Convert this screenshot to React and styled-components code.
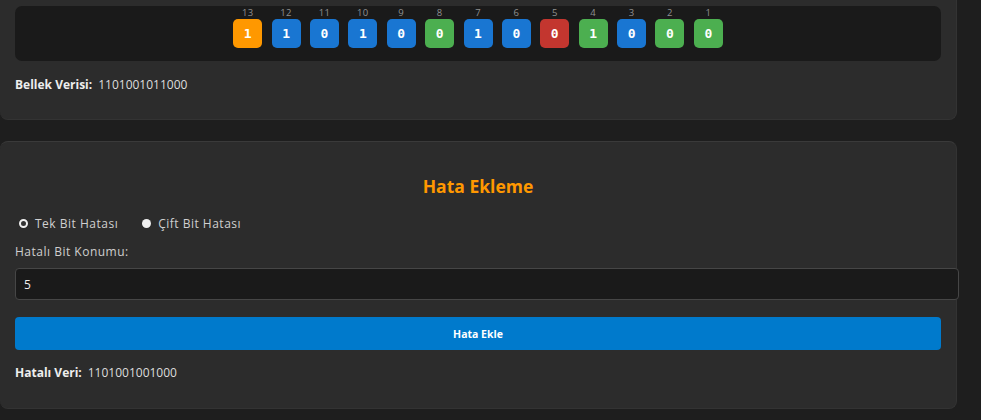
import React, { useState } from "react";
import styled, { createGlobalStyle } from "styled-components";

const GlobalStyle = createGlobalStyle`
  html, body {
    margin: 0;
    padding: 0;
    background: #1e1e1e;
    overflow: hidden;
  }
  body {
    font-family: "Open Sans", "Noto Sans", Arial, sans-serif;
    color: #dddddd;
  }
`;

const Page = styled.div`
  width: 957px;
  display: flex;
  flex-direction: column;
  gap: 21px;
`;

const Card = styled.section`
  background: #2c2c2c;
  border: 1px solid #333333;
  border-left: none;
  border-radius: ${(p) => (p.$cut ? "0 0 8px 8px" : "8px")};
  border-top: ${(p) => (p.$cut ? "none" : "1px solid #3a3a3a")};
  padding: ${(p) => (p.$cut ? "6px 15px 15px" : "14px 15px 15px")};
  box-sizing: border-box;
`;

const BitBox = styled.div`
  background: #1a1a1a;
  border-radius: 7px;
  height: 55px;
  box-sizing: border-box;
  padding-top: 1px;
  display: flex;
  justify-content: center;
  gap: 9.4px;
`;

const BitCol = styled.div`
  display: flex;
  flex-direction: column;
  align-items: center;
  width: 29px;
`;

const BitIndex = styled.span`
  font-size: 9.5px;
  line-height: 12px;
  color: #909090;
  letter-spacing: 0.3px;
`;

const bitColors = {
  parity: "#ff9800",
  data: "#1976d2",
  check: "#4caf50",
  error: "#c3362f",
};

const Bit = styled.div`
  width: 29px;
  height: 29px;
  border-radius: 5px;
  background: ${(p) => bitColors[p.$kind]};
  color: #ffffff;
  font-family: "DejaVu Sans Mono", "Liberation Mono", monospace;
  font-weight: bold;
  font-size: 13px;
  display: flex;
  align-items: center;
  justify-content: center;
`;

const DataLine = styled.p`
  margin: ${(p) => p.$m || "15px 0 11px"};
  font-size: 12px;
  line-height: 17px;
  color: #dddddd;
  strong {
    color: #eeeeee;
    font-weight: 700;
    margin-right: 6px;
  }
`;

const Title = styled.h3`
  margin: 18px 0 12px;
  text-align: center;
  color: #ff9800;
  font-size: 17.5px;
  line-height: 25px;
  font-weight: 700;
`;

const RadioRow = styled.div`
  height: 24px;
  display: flex;
  align-items: center;
  gap: 24px;
  padding-left: 4px;
`;

const RadioLabel = styled.label`
  display: flex;
  align-items: center;
  gap: 7px;
  font-size: 12px;
  letter-spacing: 0.5px;
  color: #d0d0d0;
`;

const Radio = styled.input`
  appearance: none;
  margin: 0;
  width: 9px;
  height: 9px;
  border-radius: 50%;
  background: #f0f0f0;
  box-sizing: border-box;
  &:checked {
    border: 2.5px solid #f0f0f0;
    background: #333333;
  }
`;

const FieldLabel = styled.label`
  display: block;
  margin-top: 9px;
  font-size: 12px;
  line-height: 16px;
  letter-spacing: 0.5px;
  color: #cfcfcf;
`;

const Input = styled.input`
  display: block;
  margin-top: 8px;
  width: 100%;
  box-sizing: content-box;
  height: 16px;
  padding: 7px 8px;
  background: #1a1a1a;
  border: 1px solid #464646;
  border-radius: 4px;
  color: #eeeeee;
  font-family: inherit;
  font-size: 12px;
  outline: none;
`;

const Button = styled.button`
  display: block;
  margin-top: 17px;
  width: 100%;
  height: 33px;
  border: none;
  border-radius: 4px;
  background: #007acc;
  color: #ffffff;
  font-family: inherit;
  font-weight: 700;
  font-size: 10.5px;
  cursor: pointer;
`;

const bits = [
  { i: 13, v: "1", k: "parity" },
  { i: 12, v: "1", k: "data" },
  { i: 11, v: "0", k: "data" },
  { i: 10, v: "1", k: "data" },
  { i: 9, v: "0", k: "data" },
  { i: 8, v: "0", k: "check" },
  { i: 7, v: "1", k: "data" },
  { i: 6, v: "0", k: "data" },
  { i: 5, v: "0", k: "error" },
  { i: 4, v: "1", k: "check" },
  { i: 3, v: "0", k: "data" },
  { i: 2, v: "0", k: "check" },
  { i: 1, v: "0", k: "check" },
];

export default function App() {
  const [mode, setMode] = useState("single");
  const [pos, setPos] = useState("5");
  return (
    <>
      <GlobalStyle />
      <Page>
        <Card $cut>
          <BitBox>
            {bits.map((b) => (
              <BitCol key={b.i}>
                <BitIndex>{b.i}</BitIndex>
                <Bit $kind={b.k}>{b.v}</Bit>
              </BitCol>
            ))}
          </BitBox>
          <DataLine>
            <strong>Bellek Verisi:</strong>1101001011000
          </DataLine>
        </Card>
        <Card>
          <Title>Hata Ekleme</Title>
          <RadioRow>
            <RadioLabel>
              <Radio
                type="radio"
                name="mode"
                checked={mode === "single"}
                onChange={() => setMode("single")}
              />
              Tek Bit Hatası
            </RadioLabel>
            <RadioLabel>
              <Radio
                type="radio"
                name="mode"
                checked={mode === "double"}
                onChange={() => setMode("double")}
              />
              Çift Bit Hatası
            </RadioLabel>
          </RadioRow>
          <FieldLabel>Hatalı Bit Konumu:</FieldLabel>
          <Input value={pos} onChange={(e) => setPos(e.target.value)} />
          <Button>Hata Ekle</Button>
          <DataLine $m="14px 0 12px">
            <strong>Hatalı Veri:</strong>1101001001000
          </DataLine>
        </Card>
      </Page>
    </>
  );
}
